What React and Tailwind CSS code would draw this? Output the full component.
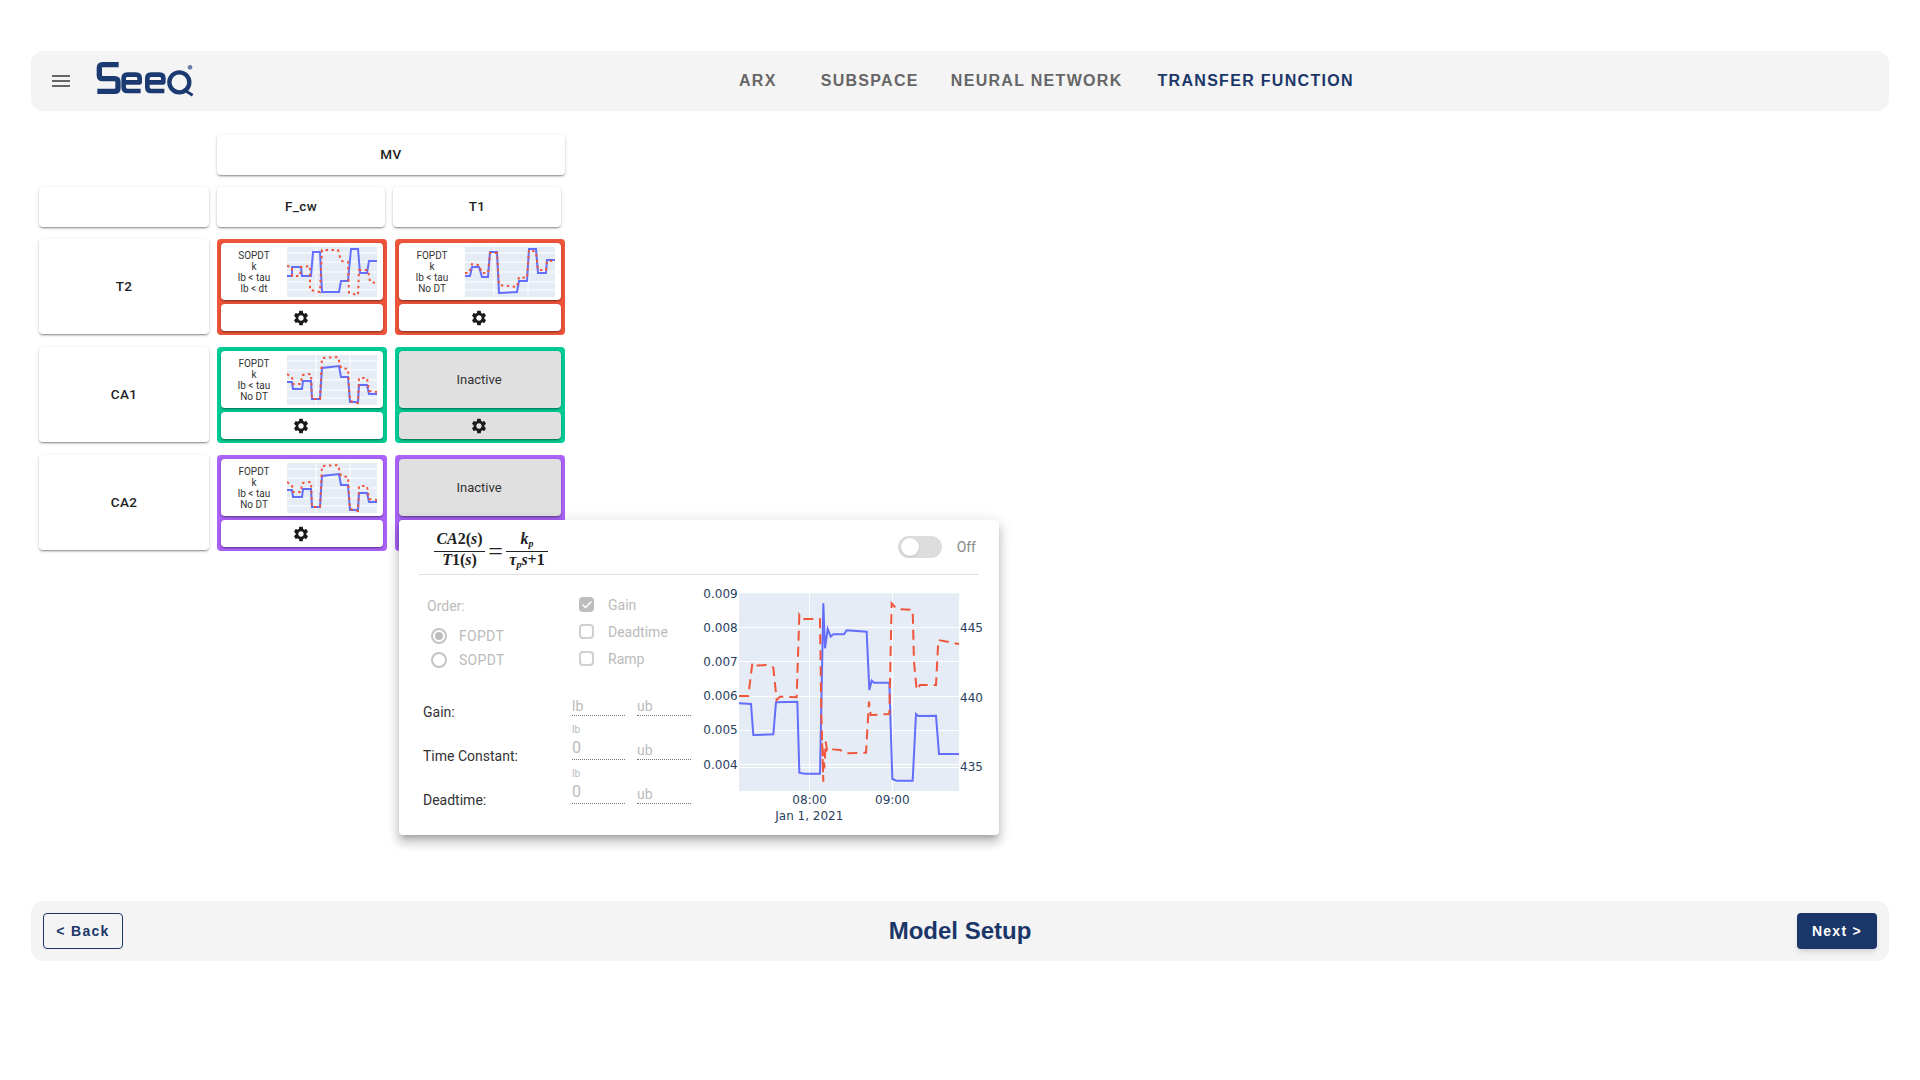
import { Check } from 'lucide-react';
import { MdMenu, MdSettings } from 'react-icons/md';

const cardShadow = 'shadow-[0_2px_2px_-1px_rgba(0,0,0,0.3),0_1px_2px_0_rgba(0,0,0,0.14),0_1px_4px_0_rgba(0,0,0,0.12)]';

const miniCharts = {
  sopdt: {
    blue: '0,29 5,29 5,20 14,20 15,29 24,29 26,5 33,5 35,45 52,45 54,34 61,34 64,2 71,2 73,26 80,26 82,14 90,14',
    red: '0,19 5,20 5,29 13,29 14,20 23,19 23,43 33,45 35,3 51,3 54,14 61,15 62,46 71,48 72,23 81,23 83,35 90,36',
  },
  t1: {
    blue: '0,29 5,29 7,20 14,20 17,30 23,30 25,5 32,5 34,46 52,45 54,34 62,34 64,2 71,2 73,26 81,26 82,13 90,13',
    red: '0,26 4,26 7,17 14,18 17,26 23,26 25,6 32,6 34,38 52,40 54,30 62,31 64,3 71,5 73,23 81,23 82,14 90,14',
  },
  ca: {
    blue: '0,27 5,27 6,34 15,34 16,26 24,26 25,44 33,44 35,13 52,11 54,22 61,22 63,47 71,47 72,30 80,30 82,39 90,39',
    red: '0,19 5,22 6,29 14,29 15,20 24,19 25,44 33,44 35,3 51,2 54,13 61,14 63,46 71,48 72,23 80,23 82,36 90,37',
  },
};

const MiniChart = ({ data }) => (
  <svg width="90" height="50" viewBox="0 0 90 50" className="shrink-0">
    <rect width="90" height="50" fill="#e5ecf6" />
    {[6, 15, 25, 35, 43].map(y => <line key={y} x1="0" x2="90" y1={y} y2={y} stroke="#fff" strokeWidth="1" />)}
    {[29, 63].map(x => <line key={x} x1={x} x2={x} y1="0" y2="50" stroke="#fff" strokeWidth="1" />)}
    <polyline points={data.blue} fill="none" stroke="#636efa" strokeWidth="2" />
    <polyline points={data.red} fill="none" stroke="#ef553b" strokeWidth="2" strokeDasharray="2.5 3.5" />
  </svg>
);

const Gear = ({ inactive }) => (
  <div className={`h-[27px] rounded flex items-center justify-center pr-[2px] ${cardShadow} ${inactive ? 'bg-[#e0e0e0]' : 'bg-white'}`}>
    <MdSettings size={18} color="#1a1a1a" />
  </div>
);

const ModelCard = ({ color, lines, data }) => (
  <div className={`w-[170px] h-[96px] rounded p-1 flex flex-col gap-1 ${color}`}>
    <div className={`h-[57px] bg-white rounded flex items-center pr-[6px] ${cardShadow}`}>
      <div className="w-[66px] text-[10px] leading-[11px] text-center text-[#333]">
        {lines.map((l, i) => <div key={i}>{l}</div>)}
      </div>
      <MiniChart data={data} />
    </div>
    <Gear />
  </div>
);

const InactiveCard = ({ color, children }) => (
  <div className={`relative w-[170px] h-[96px] rounded p-1 flex flex-col gap-1 ${color}`}>
    <div className={`h-[57px] bg-[#e0e0e0] rounded flex items-center justify-center pr-[2px] text-[13px] text-[#333] ${cardShadow}`}>Inactive</div>
    <Gear inactive />
    {children}
  </div>
);

const LabelCell = ({ children, className }) => (
  <div className={`bg-white rounded flex items-center justify-center text-[13.5px] font-medium tracking-[0.4px] text-[#222] ${cardShadow} ${className}`}>
    {children}
  </div>
);

const Logo = () => (
  <svg width="100" height="40" viewBox="225 55 300 120" fill="none" stroke="#1b3a72" strokeLinejoin="round" aria-label="Seeq">
    <path d="M296 72 H248 Q238 72 238 82 V104 Q238 114 248 114 H284 Q294 114 294 124 V142 Q294 152 284 152 H232" strokeWidth="16" />
    <path d="M362 151 H322 Q311 151 311 140 V113 Q311 102 322 102 H348 Q359 102 359 113 V125 H314" strokeWidth="14" />
    <path d="M433 151 H393 Q382 151 382 140 V113 Q382 102 393 102 H419 Q430 102 430 113 V125 H385" strokeWidth="14" />
    <circle cx="478" cy="125" r="30" strokeWidth="13" />
    <path d="M494 149 L518 164" strokeWidth="9" />
    <path d="M478 104 Q500 122 484 148" stroke="#fff" strokeWidth="3" />
    <circle cx="510" cy="80" r="7" fill="#6a7fa8" stroke="none" />
  </svg>
);

const Formula = () => (
  <div className="flex items-center pt-[10px] font-['Liberation_Serif',serif] font-bold text-[#222] text-[16px] leading-[14px]">
    <div className="flex flex-col items-center w-[51px]">
      <div className="h-[19px] whitespace-nowrap"><i>CA</i>2(<i>s</i>)</div>
      <div className="w-full h-px bg-[#222]" />
      <div className="h-[20px] pt-px whitespace-nowrap"><i>T</i>1(<i>s</i>)</div>
    </div>
    <div className="w-[21px] text-center text-[26px] font-normal">=</div>
    <div className="flex flex-col items-center w-[42px]">
      <div className="h-[19px]"><i>k<sub className="text-[10px]">p</sub></i></div>
      <div className="w-full h-px bg-[#222]" />
      <div className="h-[20px] pt-px whitespace-nowrap"><i>τ<sub className="text-[10px]">p</sub>s</i>+1</div>
    </div>
  </div>
);

const Radio = ({ checked, label }) => (
  <div className="h-6 flex items-center gap-3 pl-1 text-sm tracking-[0.3px] text-[#bbb]">
    <div className="w-4 h-4 rounded-full border-2 border-[#c4c4c4] flex items-center justify-center">
      {checked && <div className="w-2 h-2 rounded-full bg-[#bdbdbd]" />}
    </div>
    {label}
  </div>
);

const CheckRow = ({ checked, label }) => (
  <div className="h-[27px] flex items-center gap-[14px] text-sm text-[#bbb]">
    <div className={`w-[15px] h-[15px] rounded-sm flex items-center justify-center ${checked ? 'bg-[#bdbdbd]' : 'border-2 border-[#d0d0d0]'}`}>
      {checked && <Check size={12} color="#fff" strokeWidth={3} />}
    </div>
    {label}
  </div>
);

const Field = ({ value, placeholder, width }) => (
  <div className={`relative h-[26px] border-b border-dotted border-[#777] flex items-end pb-px text-[#bbb] ${width}`}>
    {value ? (
      <>
        <div className="absolute left-0 top-[-10px] text-[10px] leading-3">lb</div>
        <div className="text-base leading-[21px]">{value}</div>
      </>
    ) : (
      <div className="text-sm leading-4">{placeholder}</div>
    )}
  </div>
);

const FormRow = ({ label, value }) => (
  <div className="h-11 flex items-start">
    <div className="w-[149px] leading-[44px] text-sm text-[#333]">{label}</div>
    <Field value={value} placeholder="lb" width="w-[53px] mr-3" />
    <Field placeholder="ub" width="w-[54px]" />
  </div>
);

const BLUE_PTS = '147,565 183,567 190,660 250,658 258,562 322,560 328,773 345,776 390,776 400,265 405,400 413,342 422,365 430,358 462,358 470,346 530,350 538,525 545,497 552,503 598,503 607,792 620,797 668,797 678,597 685,603 738,602 747,717 807,717';
const RED_PTS = '147,543 175,543 187,445 190,452 235,450 250,458 260,555 270,545 320,547 328,300 335,312 390,312 394,600 400,800 396,680 403,760 407,680 411,705 418,698 425,703 450,705 470,715 528,713 537,560 542,600 598,597 605,265 620,282 668,285 672,440 680,525 690,510 738,510 745,375 807,387';

const BigChart = () => (
  <svg width="300" height="245" viewBox="15 210 900 735" className="shrink-0 mt-[10px]" fontFamily="'DejaVu Sans', sans-serif" fontSize="36" fill="#2a3f5f">
    <rect x="147" y="235" width="660" height="593" fill="#e5ecf6" />
    {[338, 440, 543, 645, 748, 757].map(y => <line key={y} x1="147" x2="807" y1={y} y2={y} stroke="#fff" strokeWidth="3" shapeRendering="crispEdges" />)}
    {[358, 607].map(x => <line key={x} x1={x} x2={x} y1="235" y2="828" stroke="#fff" strokeWidth="3" shapeRendering="crispEdges" />)}
    <polyline points={BLUE_PTS} fill="none" stroke="#636efa" strokeWidth="6" />
    <polyline points={RED_PTS} fill="none" stroke="#ef553b" strokeWidth="6" strokeDasharray="30 18" />
    {[['0.009', 237], ['0.008', 338], ['0.007', 440], ['0.006', 543], ['0.005', 645], ['0.004', 748]].map(([t, y]) => (
      <text key={t} x="143" y={y + 13} textAnchor="end">{t}</text>
    ))}
    {[['445', 338], ['440', 547], ['435', 754]].map(([t, y]) => (
      <text key={t} x="810" y={y + 13}>{t}</text>
    ))}
    <text x="359" y="868" textAnchor="middle">08:00</text>
    <text x="607" y="868" textAnchor="middle">09:00</text>
    <text x="358" y="915" textAnchor="middle">Jan 1, 2021</text>
  </svg>
);

const Popup = () => (
  <div className="absolute left-1 top-[65px] z-10 w-[600px] h-[315px] bg-white rounded shadow-[0_5px_5px_-3px_rgba(0,0,0,0.2),0_8px_10px_1px_rgba(0,0,0,0.14),0_3px_14px_2px_rgba(0,0,0,0.12)]">
    <div className="mx-5 h-[55px] border-b border-[#e0e0e0] flex items-center justify-between pl-[15px] pr-[3px]">
      <Formula />
      <div className="flex items-center gap-[15px] text-sm text-[#888]">
        <div className="relative w-11 h-[22px] rounded-full bg-[#ddd]">
          <div className="absolute left-[3px] top-[2px] w-[18px] h-[18px] rounded-full bg-white shadow-sm" />
        </div>
        Off
      </div>
    </div>
    <div className="flex">
      <div className="w-[296px] pl-6 shrink-0">
        <div className="flex mt-[17px]">
          <div className="w-[156px] pl-1">
            <div className="h-7 flex items-center text-sm text-[#bbb]">Order:</div>
            <div className="mt-1">
              <Radio checked label="FOPDT" />
              <Radio label="SOPDT" />
            </div>
          </div>
          <div className="-mt-px">
            <CheckRow checked label="Gain" />
            <CheckRow label="Deadtime" />
            <CheckRow label="Ramp" />
          </div>
        </div>
        <div className="mt-[18px]">
          <FormRow label="Gain:" />
          <FormRow label="Time Constant:" value="0" />
          <FormRow label="Deadtime:" value="0" />
        </div>
      </div>
      <BigChart />
    </div>
  </div>
);

const tabClass = "text-base font-bold tracking-[1.3px] whitespace-nowrap font-['Liberation_Sans',sans-serif]";

const App = () => {
  return (
    <div className="min-h-[1080px] bg-white px-[31px] pt-[51px] font-['Roboto',sans-serif]">
      <div className="h-[60px] bg-[#f4f4f4] rounded-xl flex items-center pl-[18px]">
        <MdMenu size={24} color="#666" />
        <div className="ml-[22px] mb-[5px]"><Logo /></div>
        <div className={`${tabClass} ml-[544px] text-[#666]`}>ARX</div>
        <div className={`${tabClass} ml-[44px] text-[#666]`}>SUBSPACE</div>
        <div className={`${tabClass} ml-8 text-[#666]`}>NEURAL NETWORK</div>
        <div className={`${tabClass} ml-[35px] text-[#1b3668]`}>TRANSFER FUNCTION</div>
      </div>

      <div className="mt-6 ml-2 flex flex-col gap-3">
        <div className="flex gap-2">
          <div className="w-[170px]" />
          <LabelCell className="w-[348px] h-10 pb-[2px]">MV</LabelCell>
        </div>
        <div className="flex gap-2">
          <LabelCell className="w-[170px] h-10" />
          <LabelCell className="w-[168px] h-10 pb-[2px]">F_cw</LabelCell>
          <LabelCell className="w-[168px] h-10 pb-[2px]">T1</LabelCell>
        </div>
        <div className="flex gap-2">
          <LabelCell className="w-[170px] h-[95px]">T2</LabelCell>
          <ModelCard color="bg-[#ef553b]" lines={['SOPDT', 'k', 'lb < tau', 'lb < dt']} data={miniCharts.sopdt} />
          <ModelCard color="bg-[#ef553b]" lines={['FOPDT', 'k', 'lb < tau', 'No DT']} data={miniCharts.t1} />
        </div>
        <div className="flex gap-2">
          <LabelCell className="w-[170px] h-[95px]">CA1</LabelCell>
          <ModelCard color="bg-[#00cc96]" lines={['FOPDT', 'k', 'lb < tau', 'No DT']} data={miniCharts.ca} />
          <InactiveCard color="bg-[#00cc96]" />
        </div>
        <div className="flex gap-2">
          <LabelCell className="w-[170px] h-[95px]">CA2</LabelCell>
          <ModelCard color="bg-[#ab63fa]" lines={['FOPDT', 'k', 'lb < tau', 'No DT']} data={miniCharts.ca} />
          <InactiveCard color="bg-[#ab63fa]"><Popup /></InactiveCard>
        </div>
      </div>

      <div className="mt-[350px] h-[60px] bg-[#f4f4f4] rounded-xl flex items-center justify-between px-3">
        <button className="w-20 h-9 rounded border border-[#1b3668] text-[#1b3668] text-sm font-bold tracking-[1.3px] font-['Liberation_Sans',sans-serif]">&lt; Back</button>
        <div className="font-['Liberation_Sans',sans-serif] font-bold text-2xl text-[#1b3668]">Model Setup</div>
        <button className="w-20 h-9 rounded bg-[#1b3668] text-white text-sm font-bold tracking-[1.3px] font-['Liberation_Sans',sans-serif] shadow-md">Next &gt;</button>
      </div>
    </div>
  );
};
export default App;
